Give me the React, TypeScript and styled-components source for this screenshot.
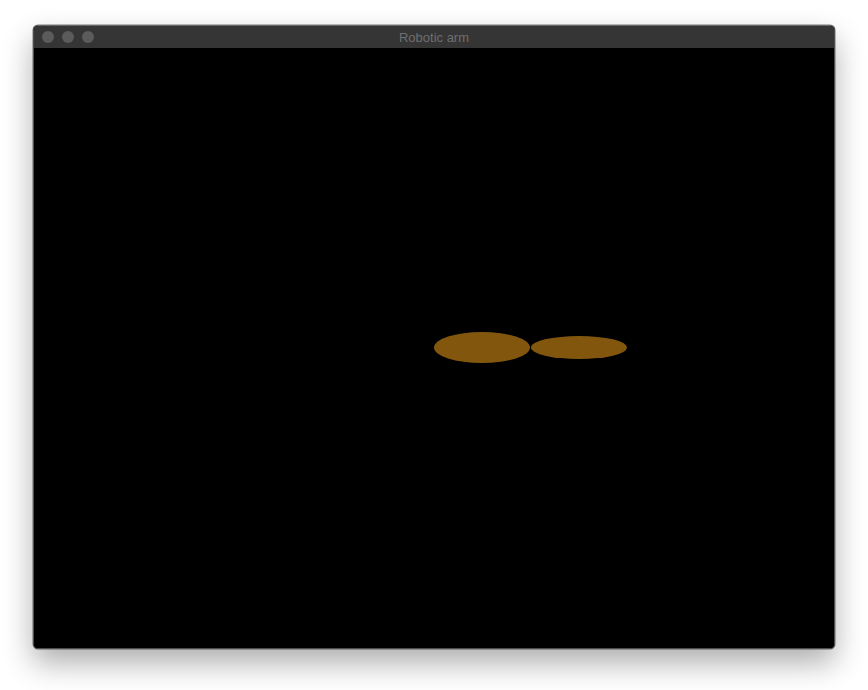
import React from "react";
import styled, { createGlobalStyle } from "styled-components";

const Global = createGlobalStyle`
  html, body { margin: 0; padding: 0; background: #ffffff; }
  body { font-family: "Helvetica Neue", "Liberation Sans", Arial, sans-serif; }
`;

const Page = styled.div`
  padding: 25px 0 0 33px;
  width: 868px;
  height: 690px;
  box-sizing: border-box;
`;

const Window = styled.div`
  width: 802px;
  box-sizing: border-box;
  display: flex;
  flex-direction: column;
  border-radius: 5px;
  overflow: hidden;
  border: 1px solid #4e4e4e;
  border-top-color: #666;
  background: #000;
  box-shadow: 0 14px 30px rgba(0, 0, 0, 0.32), 0 0 0 0.5px rgba(0, 0, 0, 0.5);
`;

const TitleBar = styled.div`
  height: 22px;
  background: #353535;
  display: flex;
  align-items: center;
  position: relative;
  padding-left: 8px;
  gap: 8px;
`;

const Light = styled.span`
  width: 12px;
  height: 12px;
  border-radius: 50%;
  background: #5b5b5b;
`;

const Title = styled.div`
  position: absolute;
  left: 0;
  right: 0;
  top: 0;
  bottom: 0;
  display: flex;
  align-items: center;
  justify-content: center;
  color: #6e6e6e;
  font-size: 13px;
  pointer-events: none;
`;

const Canvas = styled.div`
  width: 800px;
  height: 600px;
  background: #000;
`;

export default function App() {
  return (
    <>
      <Global />
      <Page>
        <Window>
          <TitleBar>
            <Light />
            <Light />
            <Light />
            <Title>Robotic arm</Title>
          </TitleBar>
          <Canvas>
            <svg width="800" height="600" viewBox="0 0 800 600">
              <ellipse cx="448" cy="299.5" rx="48" ry="15.5" fill="#82570d" />
              <ellipse cx="545" cy="299.5" rx="48" ry="11.5" fill="#82570d" />
            </svg>
          </Canvas>
        </Window>
      </Page>
    </>
  );
}
